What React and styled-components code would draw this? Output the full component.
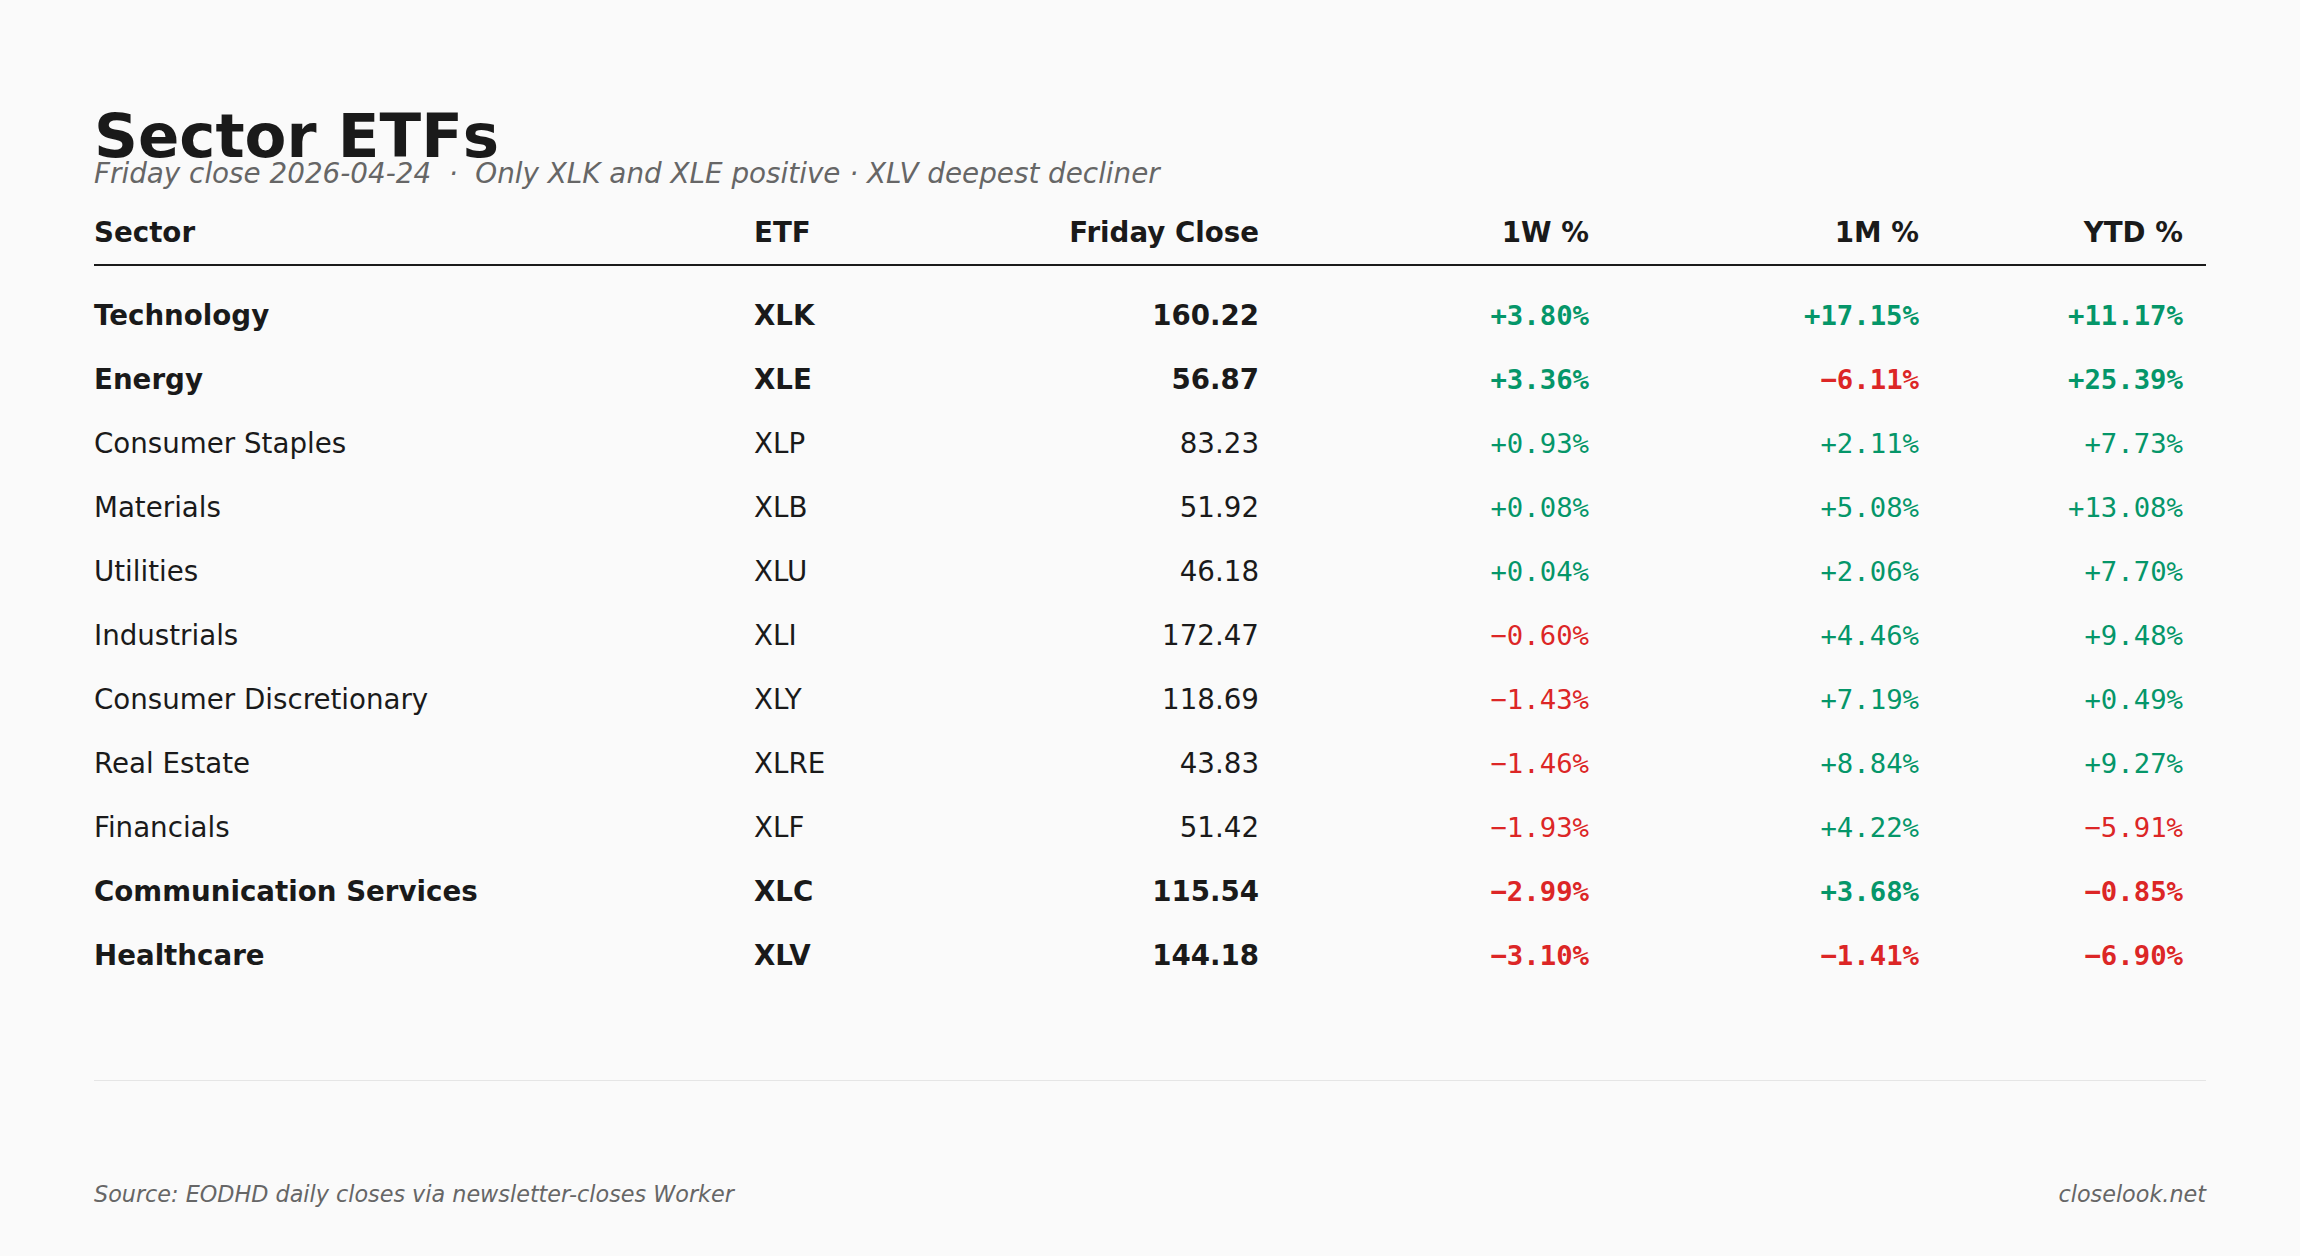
import React from "react";
import styled, { createGlobalStyle } from "styled-components";

const Global = createGlobalStyle`
  html, body { margin: 0; padding: 0; background: #fafafa; }
  body { font-family: "DejaVu Sans", "Liberation Sans", sans-serif; color: #1a1a1a; }
`;

const Page = styled.div`
  width: 2300px;
  height: 1256px;
  box-sizing: border-box;
  padding: 112px 94px 0 94px;
  background: #fafafa;
  display: flex;
  flex-direction: column;
`;

const Title = styled.h1`
  margin: 0;
  font-size: 61px;
  line-height: 48px;
  font-weight: 700;
  color: #1a1a1a;
`;

const Subtitle = styled.div`
  margin-top: 0;
  font-size: 27.8px;
  line-height: 28px;
  font-style: italic;
  color: #666666;
  white-space: pre;
`;

const Grid = styled.div`
  display: grid;
  grid-template-columns: 660px 275px 230px 330px 330px 264px;
  padding-right: 23px;
  align-items: center;
`;

const HeadRow = styled(Grid)`
  margin-top: 28px;
  padding-bottom: 14px;
  border-bottom: 2px solid #1a1a1a;
`;

const HeadCell = styled.div`
  font-size: 27.7px;
  line-height: 34px;
  font-weight: 700;
  text-align: ${(p) => (p.$right ? "right" : "left")};
`;

const Body = styled.div`
  padding-top: 18px;
`;

const Row = styled(Grid)`
  height: 64px;
`;

const Cell = styled.div`
  font-size: 27.7px;
  line-height: 64px;
  font-weight: ${(p) => (p.$bold ? 700 : 400)};
  text-align: ${(p) => (p.$right ? "right" : "left")};
  color: #1a1a1a;
  white-space: nowrap;
`;

const Pct = styled(Cell)`
  font-family: "DejaVu Sans Mono", "Liberation Mono", monospace;
  font-size: 27.3px;
  color: ${(p) => (p.$neg ? "#dc2626" : "#059669")};
`;

const Divider = styled.div`
  margin-top: 92px;
  height: 1px;
  background: #e5e5e5;
`;

const Footer = styled.div`
  margin-top: 99px;
  display: flex;
  justify-content: space-between;
  font-size: 22.3px;
  line-height: 28px;
  font-style: italic;
  color: #666666;
`;

const rows = [
  ["Technology", "XLK", "160.22", "+3.80%", "+17.15%", "+11.17%", true],
  ["Energy", "XLE", "56.87", "+3.36%", "\u22126.11%", "+25.39%", true],
  ["Consumer Staples", "XLP", "83.23", "+0.93%", "+2.11%", "+7.73%", false],
  ["Materials", "XLB", "51.92", "+0.08%", "+5.08%", "+13.08%", false],
  ["Utilities", "XLU", "46.18", "+0.04%", "+2.06%", "+7.70%", false],
  ["Industrials", "XLI", "172.47", "\u22120.60%", "+4.46%", "+9.48%", false],
  ["Consumer Discretionary", "XLY", "118.69", "\u22121.43%", "+7.19%", "+0.49%", false],
  ["Real Estate", "XLRE", "43.83", "\u22121.46%", "+8.84%", "+9.27%", false],
  ["Financials", "XLF", "51.42", "\u22121.93%", "+4.22%", "\u22125.91%", false],
  ["Communication Services", "XLC", "115.54", "\u22122.99%", "+3.68%", "\u22120.85%", true],
  ["Healthcare", "XLV", "144.18", "\u22123.10%", "\u22121.41%", "\u22126.90%", true],
];

export default function App() {
  return (
    <Page>
      <Global />
      <Title>Sector ETFs</Title>
      <Subtitle>Friday close 2026-04-24  ·  Only XLK and XLE positive · XLV deepest decliner</Subtitle>
      <HeadRow>
        <HeadCell>Sector</HeadCell>
        <HeadCell>ETF</HeadCell>
        <HeadCell $right>Friday Close</HeadCell>
        <HeadCell $right>1W %</HeadCell>
        <HeadCell $right>1M %</HeadCell>
        <HeadCell $right>YTD %</HeadCell>
      </HeadRow>
      <Body>
        {rows.map(([name, etf, close, w, m, y, bold]) => (
          <Row key={etf}>
            <Cell $bold={bold}>{name}</Cell>
            <Cell $bold={bold}>{etf}</Cell>
            <Cell $bold={bold} $right>{close}</Cell>
            <Pct $bold={bold} $right $neg={w.startsWith("\u2212")}>{w}</Pct>
            <Pct $bold={bold} $right $neg={m.startsWith("\u2212")}>{m}</Pct>
            <Pct $bold={bold} $right $neg={y.startsWith("\u2212")}>{y}</Pct>
          </Row>
        ))}
      </Body>
      <Divider />
      <Footer>
        <span>Source: EODHD daily closes via newsletter-closes Worker</span>
        <span>closelook.net</span>
      </Footer>
    </Page>
  );
}
